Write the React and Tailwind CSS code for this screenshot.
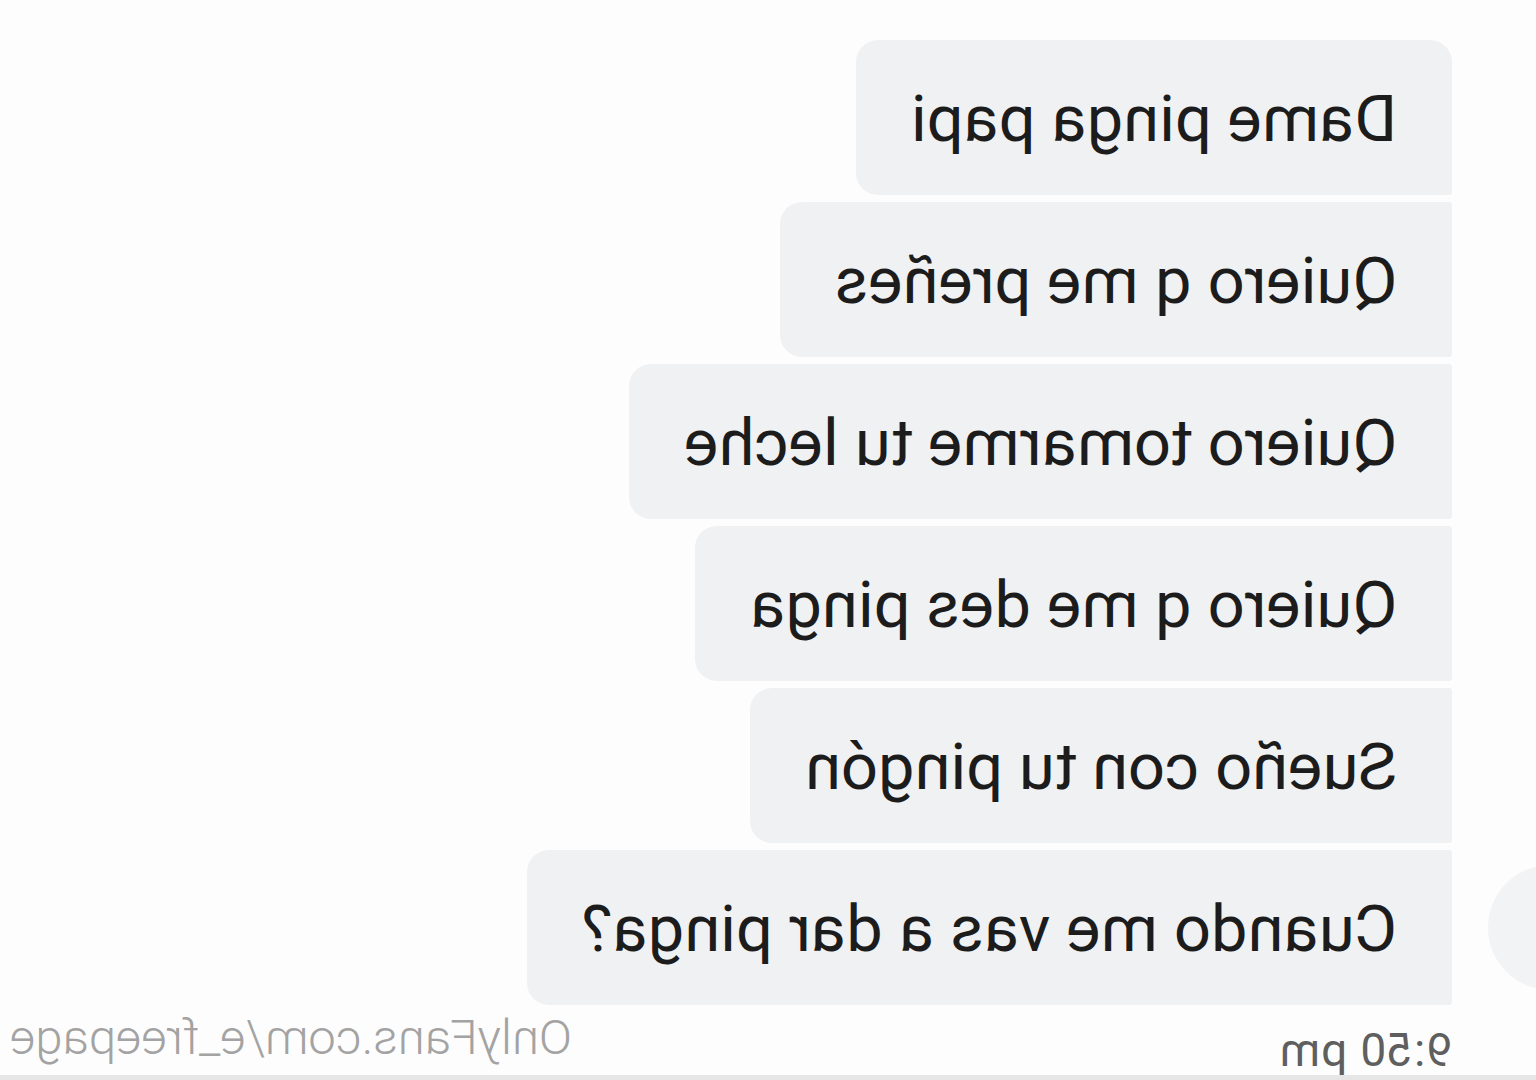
export default function App() {
  const msgs = [
    "Dame pinga papi",
    "Quiero q me preñes",
    "Quiero tomarme tu leche",
    "Quiero q me des pinga",
    "Sueño con tu pingón",
    "Cuando me vas a dar pinga?",
  ];
  return (
    <div
      className="w-[1536px] h-[1080px] bg-[#fdfdfd] overflow-hidden relative -scale-x-100"
      style={{ fontFamily: "Roboto, 'Liberation Sans', sans-serif" }}
    >
      <div className="flex flex-col gap-[7px] pt-[40px]">
        {msgs.map((m, i) => (
          <div key={i} className="flex items-center">
            <div className="w-[84px] shrink-0 flex items-center">
              {i === msgs.length - 1 && (
                <div className="w-[125px] h-[125px] shrink-0 rounded-full bg-[#f2f3f5] -ml-[77px]" />
              )}
            </div>
            <div
              className={
                "h-[155px] flex items-center px-[55px] pt-[3px] bg-[#f0f1f3] text-[#1c1c1c] text-[65px] leading-none rounded-r-[22px] " +
                (i === 0 ? "rounded-tl-[22px] rounded-bl-[3px]" : "rounded-l-[3px]")
              }
            >
              <span className="whitespace-nowrap">{m}</span>
            </div>
          </div>
        ))}
      </div>
      <div className="flex items-start justify-between pl-[84px] pr-[10px] mt-[8px]">
        <span className="text-[46px] text-[#5f5f5f] leading-none mt-[14px] tracking-[1px]">9:50 pm</span>
        <span className="text-[49px] text-[#a3a3a3] font-light leading-none">OnlyFans.com/e_freepage</span>
      </div>
      <div className="absolute bottom-0 left-0 w-full h-[5px] bg-[#e6e6e6]" />
    </div>
  );
}
